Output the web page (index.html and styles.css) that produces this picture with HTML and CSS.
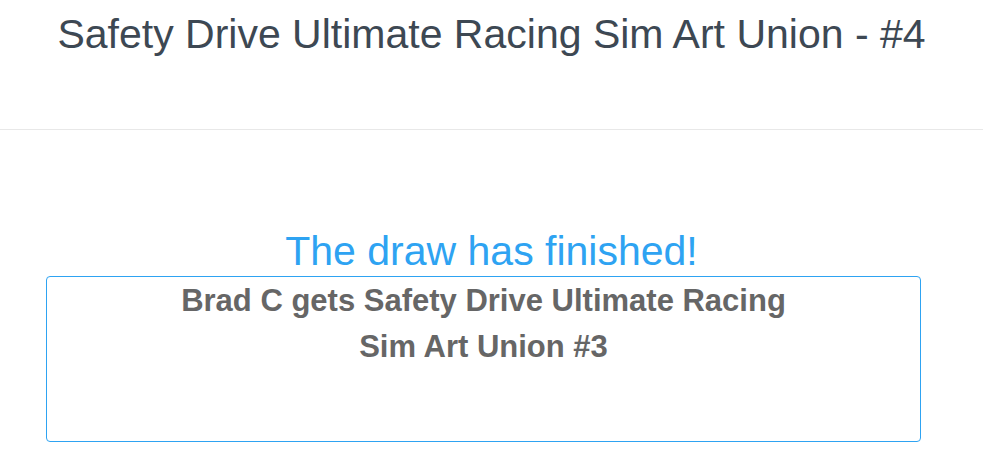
FILE: index.html
```html
<!DOCTYPE html>
<html>
<head>
<meta charset="utf-8">
<link rel="stylesheet" href="styles.css">
</head>
<body>
<header class="top">
  <h1 class="title">Safety Drive Ultimate Racing Sim Art Union - #4</h1>
</header>
<main class="content">
  <h2 class="status">The draw has finished!</h2>
  <div class="result">
    <p class="winner">Brad C gets Safety Drive Ultimate Racing Sim Art Union #3</p>
  </div>
</main>
</body>
</html>
```

FILE: styles.css
```css
html, body {
  margin: 0;
  padding: 0;
  background: #fff;
  font-family: "Liberation Sans", Arial, sans-serif;
}
.top {
  height: 130px;
  border-bottom: 1px solid #e8e8e8;
  box-sizing: border-box;
}
.title {
  margin: 0;
  padding-top: 9px;
  text-align: center;
  font-weight: normal;
  font-size: 41px;
  line-height: 50px;
  color: #3d4853;
}
.content {
  padding-top: 97px;
}
.status {
  margin: 0;
  text-align: center;
  font-weight: normal;
  font-size: 41px;
  line-height: 49px;
  color: #2ea3f2;
}
.result {
  margin-left: 46px;
  width: 875px;
  height: 166px;
  box-sizing: border-box;
  border: 1px solid #2ea3f2;
  border-radius: 4px;
}
.winner {
  margin: 0 auto;
  max-width: 640px;
  padding-top: 1px;
  text-align: center;
  font-weight: bold;
  font-size: 31px;
  line-height: 46px;
  color: #666;
}
```
